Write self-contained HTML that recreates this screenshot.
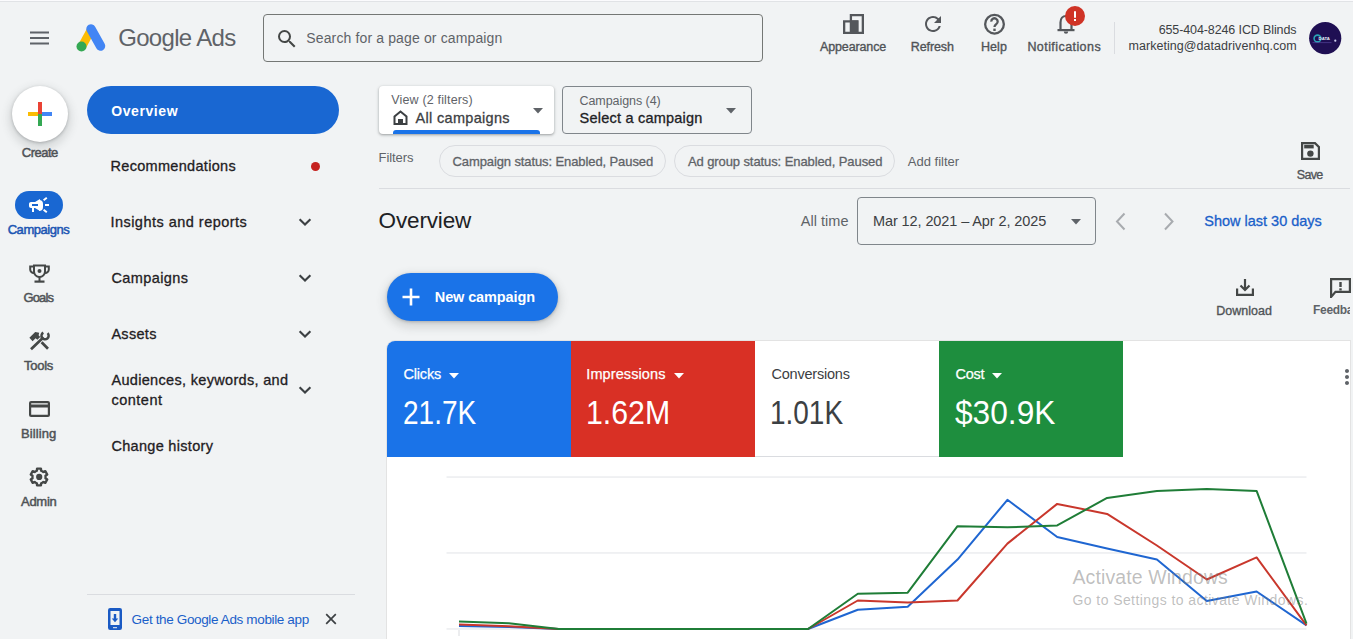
<!DOCTYPE html>
<html><head><meta charset="utf-8">
<style>
*{box-sizing:border-box;margin:0;padding:0}
html,body{width:1353px;height:639px;overflow:hidden;background:#f1f3f4;font-family:"Liberation Sans",sans-serif;position:relative}
.a{position:absolute;white-space:nowrap}
</style></head><body>
<div class="a" style="left:0;top:0;width:1353px;height:1px;background:#fbfbfd"></div>
<div class="a" style="left:0;top:1px;width:1353px;height:1px;background:#e1e3e6"></div>
<svg class="a" style="left:30px;top:31px" width="19" height="14" viewBox="0 0 19 14"><rect x="0" y="0.5" width="19" height="2" fill="#5f6368"/><rect x="0" y="6" width="19" height="2" fill="#5f6368"/><rect x="0" y="11.5" width="19" height="2" fill="#5f6368"/></svg>
<svg class="a" style="left:74px;top:22px" width="34" height="32" viewBox="0 0 34 32">
<line x1="8.5" y1="23.5" x2="17" y2="8" stroke="#fbbc04" stroke-width="8.5" stroke-linecap="round"/>
<line x1="17" y1="7" x2="26.5" y2="24" stroke="#4285f4" stroke-width="9.5" stroke-linecap="round"/>
<circle cx="7.5" cy="24.5" r="5" fill="#34a853"/></svg>
<div class="a" style="left:118.20px;top:26.200000000000003px;font-size:24px;line-height:24px;color:#5f6368;letter-spacing:-0.679px;">Google Ads</div>
<div class="a" style="left:263px;top:14px;width:500px;height:48px;border:1px solid #747775;border-radius:4px"></div>
<svg class="a" style="left:275px;top:27px" width="24" height="24" viewBox="0 0 24 24"><path fill="#444746" d="M15.5 14h-.79l-.28-.27A6.47 6.47 0 0 0 16 9.5 6.5 6.5 0 1 0 9.5 16c1.61 0 3.09-.59 4.23-1.57l.27.28v.79l5 4.99L20.49 19l-4.99-5zm-6 0C7.01 14 5 11.99 5 9.5S7.01 5 9.5 5 14 7.01 14 9.5 11.99 14 9.5 14z"/></svg>
<div class="a" style="left:306.30px;top:30.5px;font-size:14px;line-height:14px;color:#5f6368;letter-spacing:0.134px;">Search for a page or campaign</div>
<svg class="a" style="left:843px;top:14px" width="22" height="20" viewBox="0 0 22 20">
<path fill="none" stroke="#54575b" stroke-width="2.3" d="M7.9 1.15H19.85V18.85H7.9Z"/>
<path fill="none" stroke="#54575b" stroke-width="2.3" d="M1.15 18.85V7.3H14.5V18.85Z"/>
<rect x="7" y="6.5" width="8" height="13" fill="#54575b"/></svg>
<div class="a" style="left:820.00px;top:40.7px;font-size:12.5px;line-height:12.5px;-webkit-text-stroke:0.35px #505357;color:#505357;letter-spacing:-0.129px;">Appearance</div>
<svg class="a" style="left:921px;top:12px" width="24" height="24" viewBox="0 0 24 24"><path fill="#54575b" d="M17.65 6.35A7.958 7.958 0 0 0 12 4c-4.42 0-7.99 3.58-7.99 8s3.57 8 7.99 8c3.73 0 6.84-2.55 7.73-6h-2.08A5.99 5.99 0 0 1 12 18c-3.31 0-6-2.69-6-6s2.69-6 6-6c1.66 0 3.14.69 4.22 1.78L13 11h7V4l-2.35 2.35z"/></svg>
<div class="a" style="left:910.80px;top:40.7px;font-size:12.5px;line-height:12.5px;-webkit-text-stroke:0.35px #505357;color:#505357;letter-spacing:-0.119px;">Refresh</div>
<svg class="a" style="left:983px;top:12.5px" width="23" height="23" viewBox="0 0 23 23"><circle cx="11.5" cy="11.2" r="9.35" fill="none" stroke="#54575b" stroke-width="2.3"/><path fill="none" stroke="#54575b" stroke-width="2.3" d="M8.3 8.6A3.2 3.2 0 1 1 13.2 11.2C12 12 11.5 12.4 11.5 14"/><rect x="10.3" y="15.6" width="2.4" height="2.4" fill="#54575b"/></svg>
<div class="a" style="left:980.90px;top:40.7px;font-size:12.5px;line-height:12.5px;-webkit-text-stroke:0.35px #505357;color:#505357;letter-spacing:0.115px;">Help</div>
<svg class="a" style="left:1055.5px;top:12px" width="20" height="22" viewBox="0 0 20 22">
<path fill="none" stroke="#54575b" stroke-width="2.2" d="M4.5 18V10.5C4.5 6.5 6.8 4 10 4S15.5 6.5 15.5 10.5V18"/>
<rect x="1.5" y="17" width="17" height="2.2" fill="#54575b"/><path fill="#54575b" d="M7.8 19.5h4.4a2.2 2.2 0 0 1-4.4 0z"/></svg>
<div class="a" style="left:1065px;top:6px;width:20px;height:20px;border-radius:50%;background:#cf3326"></div>
<div class="a" style="left:1074px;top:10.5px;width:2.2px;height:7px;background:#fff;border-radius:1px"></div><div class="a" style="left:1074px;top:19px;width:2.2px;height:2.2px;background:#fff"></div>
<div class="a" style="left:1027.40px;top:40.7px;font-size:12.5px;line-height:12.5px;-webkit-text-stroke:0.35px #505357;color:#505357;letter-spacing:0.430px;">Notifications</div>
<div class="a" style="left:1114px;top:22px;width:1px;height:32px;background:#dadce0"></div>
<div class="a" style="left:1158.70px;top:23.6px;font-size:12.5px;line-height:12.5px;color:#3c4043;letter-spacing:-0.114px;">655-404-8246 ICD Blinds</div>
<div class="a" style="left:1128.60px;top:39.7px;font-size:12.5px;line-height:12.5px;color:#3c4043;letter-spacing:0.043px;">marketing@datadrivenhq.com</div>
<svg class="a" style="left:1309px;top:21.5px" width="33" height="33" viewBox="0 0 33 33">
<circle cx="16.2" cy="16.2" r="16.1" fill="#1f0f53"/>
<circle cx="8.5" cy="16.5" r="3.4" fill="none" stroke="#2aa2b5" stroke-width="1.6"/>
<text x="9.6" y="18.4" font-family="Liberation Sans" font-size="4.3" font-weight="bold" fill="#e8eaf6">DATA</text>
<rect x="3.5" y="20.2" width="19" height="0.9" fill="#5a4aa0" opacity=".7"/>
<circle cx="26.3" cy="18.7" r="1.1" fill="#d0d0f0"/></svg>
<div class="a" style="left:12px;top:86px;width:56px;height:56px;border-radius:50%;background:#fff;box-shadow:0 1px 3px rgba(60,64,67,.3),0 4px 8px 3px rgba(60,64,67,.15)"></div>
<svg class="a" style="left:28px;top:102px" width="24" height="24" viewBox="0 0 24 24">
<rect x="10" y="0" width="4" height="12" fill="#ea4335"/><rect x="10" y="12" width="4" height="12" fill="#34a853"/>
<rect x="0" y="10" width="10" height="4" fill="#fbbc04"/><rect x="14" y="10" width="10" height="4" fill="#4285f4"/></svg>
<div class="a" style="left:21.80px;top:145.6px;font-size:13px;line-height:13px;-webkit-text-stroke:0.5px #505357;color:#505357;letter-spacing:-0.518px;">Create</div>
<div class="a" style="left:15px;top:191px;width:48px;height:28px;border-radius:14px;background:#1967d2"></div>
<svg class="a" style="left:27px;top:193px" width="24" height="24" viewBox="0 0 24 24"><path fill="#fff" d="M18 11v2h4v-2h-4zm-2 6.61c.96.71 2.21 1.65 3.2 2.39.4-.53.8-1.07 1.2-1.6-.99-.74-2.24-1.68-3.2-2.4-.4.54-.8 1.08-1.2 1.610zM20.4 5.6c-.4-.53-.8-1.07-1.2-1.6-.99.74-2.24 1.68-3.2 2.4.4.53.8 1.07 1.2 1.6.96-.72 2.21-1.65 3.2-2.4zM4 9c-1.1 0-2 .9-2 2v2c0 1.1.9 2 2 2h1v4h2v-4h1l5 3V6L8 9H4z"/></svg>
<div class="a" style="left:32.2px;top:204px;width:6px;height:2px;background:#1967d2"></div><div class="a" style="left:38.5px;top:199.5px;width:4.3px;height:11px;border-radius:0 6px 6px 0;background:#fff"></div>
<div class="a" style="left:7.70px;top:222.9px;font-size:13px;line-height:13px;-webkit-text-stroke:0.5px #1b55b3;color:#1b55b3;letter-spacing:-0.457px;">Campaigns</div>
<svg class="a" style="left:29px;top:264px" width="21" height="19" viewBox="0 0 21 19">
<path fill="none" stroke="#444746" stroke-width="2" d="M5 1.5H16V7.5A5.5 5.5 0 0 1 5 7.5Z"/>
<path fill="none" stroke="#444746" stroke-width="2" d="M5 2.5H1.2V5.5A3.5 3.5 0 0 0 5 9M16 2.5H19.8V5.5A3.5 3.5 0 0 1 16 9"/>
<rect x="9.5" y="12" width="2" height="5" fill="#444746"/><rect x="5.5" y="16.5" width="10" height="2.2" fill="#444746"/>
<circle cx="10.5" cy="7" r="2" fill="#444746"/></svg>
<div class="a" style="left:23.40px;top:290.9px;font-size:13px;line-height:13px;-webkit-text-stroke:0.5px #505357;color:#505357;letter-spacing:-0.840px;">Goals</div>
<svg class="a" style="left:24px;top:326px" width="30" height="30" viewBox="0 0 30 30">
<path fill="none" stroke="#444746" stroke-width="2.7" d="M7 23.2L19.5 11.2M17.6 16.3L24 22.8"/>
<path fill="#444746" d="M5.4 11.8L11.2 6.1L15.2 6.8L14.6 9.3L16.2 10.9L13.4 13.8L11.6 12.3L8.6 15.2Z"/>
<path fill="none" stroke="#444746" stroke-width="2.5" d="M23.6 7.2A3.6 3.6 0 1 1 19.3 6.6"/>
</svg>
<div class="a" style="left:24.00px;top:358.95px;font-size:13px;line-height:13px;-webkit-text-stroke:0.5px #505357;color:#505357;letter-spacing:-0.262px;">Tools</div>
<svg class="a" style="left:29px;top:401px" width="21" height="16" viewBox="0 0 21 16">
<rect x="1.1" y="1.1" width="18.8" height="13.8" rx="1" fill="none" stroke="#444746" stroke-width="2.2"/>
<rect x="1" y="3.5" width="19" height="3" fill="#444746"/></svg>
<div class="a" style="left:20.90px;top:426.95px;font-size:13px;line-height:13px;-webkit-text-stroke:0.5px #505357;color:#505357;letter-spacing:0.124px;">Billing</div>
<svg class="a" style="left:24px;top:462px" width="30" height="30" viewBox="0 0 30 30"><path fill="none" stroke="#444746" stroke-width="2.4" stroke-linejoin="round" d="M11.70 9.28 L12.85 8.76 L13.07 6.62 L16.93 6.62 L17.15 8.76 L18.30 9.28 L19.33 10.02 L21.29 9.13 L23.22 12.49 L21.48 13.74 L21.60 15.00 L21.48 16.26 L23.22 17.51 L21.29 20.87 L19.33 19.98 L18.30 20.72 L17.15 21.24 L16.93 23.38 L13.07 23.38 L12.85 21.24 L11.70 20.72 L10.67 19.98 L8.71 20.87 L6.78 17.51 L8.52 16.26 L8.40 15.00 L8.52 13.74 L6.78 12.49 L8.71 9.13 L10.67 10.02Z"/><circle cx="15.2" cy="14.9" r="3.1" fill="#444746"/></svg>
<div class="a" style="left:21.00px;top:494.95px;font-size:13px;line-height:13px;-webkit-text-stroke:0.5px #505357;color:#505357;letter-spacing:-0.280px;">Admin</div>
<div class="a" style="left:87px;top:86px;width:252px;height:48px;border-radius:24px;background:#1967d2"></div>
<div class="a" style="left:111.30px;top:103.6px;font-size:14px;line-height:14px;font-weight:bold;color:#fff;letter-spacing:0.575px;">Overview</div>
<div class="a" style="left:110.50px;top:159.1px;font-size:14.5px;line-height:14.5px;-webkit-text-stroke:0.3px #1f2023;color:#1f2023;letter-spacing:0.311px;">Recommendations</div>
<div class="a" style="left:310.5px;top:161.5px;width:9px;height:9px;border-radius:50%;background:#c5221f"></div>
<div class="a" style="left:110.40px;top:214.9px;font-size:14.5px;line-height:14.5px;-webkit-text-stroke:0.3px #1f2023;color:#1f2023;letter-spacing:0.479px;">Insights and reports</div>
<svg class="a" style="left:293px;top:210px" width="24" height="24" viewBox="0 0 24 24"><path fill="none" stroke="#3c4043" stroke-width="2.1" d="M6.6 9.2L12 14.6L17.4 9.2"/></svg>
<div class="a" style="left:111.40px;top:271.0px;font-size:14.5px;line-height:14.5px;-webkit-text-stroke:0.3px #1f2023;color:#1f2023;letter-spacing:0.413px;">Campaigns</div>
<svg class="a" style="left:293px;top:266px" width="24" height="24" viewBox="0 0 24 24"><path fill="none" stroke="#3c4043" stroke-width="2.1" d="M6.6 9.2L12 14.6L17.4 9.2"/></svg>
<div class="a" style="left:111.40px;top:326.9px;font-size:14.5px;line-height:14.5px;-webkit-text-stroke:0.3px #1f2023;color:#1f2023;letter-spacing:0.307px;">Assets</div>
<svg class="a" style="left:293px;top:322px" width="24" height="24" viewBox="0 0 24 24"><path fill="none" stroke="#3c4043" stroke-width="2.1" d="M6.6 9.2L12 14.6L17.4 9.2"/></svg>
<div class="a" style="left:111.40px;top:373.0px;font-size:14.5px;line-height:14.5px;-webkit-text-stroke:0.3px #1f2023;color:#1f2023;letter-spacing:0.322px;">Audiences, keywords, and</div>
<div class="a" style="left:111.40px;top:392.7px;font-size:14.5px;line-height:14.5px;-webkit-text-stroke:0.3px #1f2023;color:#1f2023;letter-spacing:0.511px;">content</div>
<svg class="a" style="left:293px;top:378px" width="24" height="24" viewBox="0 0 24 24"><path fill="none" stroke="#3c4043" stroke-width="2.1" d="M6.6 9.2L12 14.6L17.4 9.2"/></svg>
<div class="a" style="left:111.40px;top:438.8px;font-size:14.5px;line-height:14.5px;-webkit-text-stroke:0.3px #1f2023;color:#1f2023;letter-spacing:0.309px;">Change history</div>
<div class="a" style="left:87px;top:594px;width:268px;height:1px;background:#dadce0"></div>
<svg class="a" style="left:108px;top:608px" width="14" height="22" viewBox="0 0 14 22">
<rect x="0" y="0" width="14" height="22" rx="2.2" fill="#1a5ac4"/>
<rect x="2.5" y="3" width="9" height="14" fill="#f1f3f4"/>
<rect x="5" y="19.2" width="4" height="1" fill="#f1f3f4"/>
<path fill="#1a5ac4" d="M5.8 6.1h2.4v4.3h2.1L7 14.2 3.7 10.4h2.1z"/></svg>
<div class="a" style="left:131.60px;top:613.2px;font-size:13.5px;line-height:13.5px;color:#1a5fc9;letter-spacing:-0.359px;">Get the Google Ads mobile app</div>
<svg class="a" style="left:325px;top:613px" width="12" height="12" viewBox="0 0 12 12"><path stroke="#3c4043" stroke-width="1.7" d="M1.2 1.2L10.8 10.8M10.8 1.2L1.2 10.8"/></svg>
<div class="a" style="left:379px;top:86px;width:175px;height:48px;border-radius:4px;background:#fff;box-shadow:0 1px 2px rgba(60,64,67,.3),0 1px 3px 1px rgba(60,64,67,.15);overflow:hidden"><div style="position:absolute;left:14px;top:44px;width:147px;height:4px;background:#1a73e8;border-radius:3px 3px 0 0"></div></div>
<div class="a" style="left:391.30px;top:93.9px;font-size:12.5px;line-height:12.5px;color:#5f6368;letter-spacing:0.161px;">View (2 filters)</div>
<svg class="a" style="left:393px;top:110px" width="15" height="15" viewBox="0 0 15 15"><path fill="none" stroke="#3c4043" stroke-width="2" d="M1.5 14V6.5L7.5 1.5L13.5 6.5V14Z"/><rect x="5" y="9" width="5" height="5" fill="#3c4043"/></svg>
<div class="a" style="left:415.60px;top:110.6px;font-size:14.5px;line-height:14.5px;-webkit-text-stroke:0.3px #3c4043;color:#3c4043;letter-spacing:0.307px;">All campaigns</div>
<svg class="a" style="left:533px;top:107.5px" width="10" height="6" viewBox="0 0 10 6"><path fill="#5f6368" d="M0 0h10L5 5.5z"/></svg>
<div class="a" style="left:562px;top:86px;width:190px;height:48px;border:1px solid #80868b;border-radius:4px"></div>
<div class="a" style="left:579.50px;top:95px;font-size:12.5px;line-height:12.5px;color:#5f6368;letter-spacing:-0.059px;">Campaigns (4)</div>
<div class="a" style="left:579.50px;top:110.9px;font-size:14.5px;line-height:14.5px;-webkit-text-stroke:0.3px #202124;color:#202124;letter-spacing:0.223px;">Select a campaign</div>
<svg class="a" style="left:726px;top:107.5px" width="10" height="6" viewBox="0 0 10 6"><path fill="#5f6368" d="M0 0h10L5 5.5z"/></svg>
<div class="a" style="left:378.60px;top:150.8px;font-size:13px;line-height:13px;color:#5f6368;letter-spacing:-0.081px;">Filters</div>
<div class="a" style="left:439px;top:145px;width:227px;height:32px;border:1px solid #dadce0;border-radius:16px"></div>
<div class="a" style="left:452.50px;top:154.85px;font-size:13px;line-height:13px;-webkit-text-stroke:0.3px #5f6368;color:#5f6368;letter-spacing:-0.102px;">Campaign status: Enabled, Paused</div>
<div class="a" style="left:674px;top:145px;width:221px;height:32px;border:1px solid #dadce0;border-radius:16px"></div>
<div class="a" style="left:687.90px;top:154.85px;font-size:13px;line-height:13px;-webkit-text-stroke:0.3px #5f6368;color:#5f6368;letter-spacing:-0.089px;">Ad group status: Enabled, Paused</div>
<div class="a" style="left:907.80px;top:154.85px;font-size:13px;line-height:13px;color:#5f6368;letter-spacing:0.003px;">Add filter</div>
<svg class="a" style="left:1301px;top:142px" width="19" height="18" viewBox="0 0 19 18"><path fill="none" stroke="#444746" stroke-width="2.2" d="M1.1 1.1H14L17.9 5V16.9H1.1Z"/><rect x="3.2" y="2.8" width="9.5" height="3.6" fill="#444746"/><circle cx="9.4" cy="11.6" r="3.2" fill="#444746"/></svg>
<div class="a" style="left:1296.80px;top:168.5px;font-size:12.5px;line-height:12.5px;-webkit-text-stroke:0.35px #505357;color:#505357;letter-spacing:-0.680px;">Save</div>
<div class="a" style="left:379px;top:188px;width:971px;height:1px;background:#dadce0"></div>
<div class="a" style="left:378.60px;top:209.8px;font-size:22.5px;line-height:22.5px;color:#202124;letter-spacing:-0.160px;">Overview</div>
<div class="a" style="left:800.80px;top:214.0px;font-size:14.5px;line-height:14.5px;color:#5f6368;letter-spacing:0.018px;">All time</div>
<div class="a" style="left:857px;top:197px;width:239px;height:48px;border:1px solid #80868b;border-radius:4px"></div>
<div class="a" style="left:873.00px;top:214.0px;font-size:14.5px;line-height:14.5px;color:#3c4043;letter-spacing:-0.099px;">Mar 12, 2021 &ndash; Apr 2, 2025</div>
<svg class="a" style="left:1070.5px;top:218.5px" width="10" height="6" viewBox="0 0 10 6"><path fill="#5f6368" d="M0 0h10L5 5.5z"/></svg>
<svg class="a" style="left:1114px;top:211px" width="14" height="20" viewBox="0 0 14 20"><path fill="none" stroke="#a8abaf" stroke-width="2" d="M10.5 2.5L3 10.5L10.5 18.5"/></svg>
<svg class="a" style="left:1162px;top:211px" width="14" height="20" viewBox="0 0 14 20"><path fill="none" stroke="#a8abaf" stroke-width="2" d="M3 2.5L10.5 10.5L3 18.5"/></svg>
<div class="a" style="left:1204.30px;top:213.85px;font-size:14.5px;line-height:14.5px;-webkit-text-stroke:0.3px #1a5fc9;color:#1a5fc9;letter-spacing:-0.008px;">Show last 30 days</div>
<div class="a" style="left:387px;top:273px;width:171px;height:48px;border-radius:24px;background:#1a73e8;box-shadow:0 1px 3px rgba(60,64,67,.3),0 4px 8px 3px rgba(60,64,67,.15)"></div>
<svg class="a" style="left:402px;top:288px" width="18" height="18" viewBox="0 0 18 18"><path stroke="#fff" stroke-width="2.6" d="M9 0.5V17.5M0.5 9H17.5"/></svg>
<div class="a" style="left:434.80px;top:290.2px;font-size:14.5px;line-height:14.5px;font-weight:bold;color:#fff;letter-spacing:-0.116px;">New campaign</div>
<svg class="a" style="left:1236px;top:279px" width="18" height="17" viewBox="0 0 18 17"><path fill="none" stroke="#444746" stroke-width="2.2" d="M1.1 9.5V15.9H16.9V9.5"/><path fill="none" stroke="#444746" stroke-width="2.2" d="M9 0V11M4.5 6.5L9 11L13.5 6.5"/></svg>
<div class="a" style="left:1216.20px;top:304.8px;font-size:12.5px;line-height:12.5px;-webkit-text-stroke:0.35px #505357;color:#505357;letter-spacing:0.023px;">Download</div>
<svg class="a" style="left:1330px;top:278px" width="21" height="20" viewBox="0 0 21 20"><path fill="none" stroke="#444746" stroke-width="2.2" d="M1.1 19V1.1H19.9V13.9H5.5Z"/><rect x="9.3" y="4" width="2.4" height="5" fill="#444746"/><rect x="9.3" y="10.3" width="2.4" height="2.2" fill="#444746"/></svg>
<div class="a" style="left:1313px;top:300px;width:37px;height:20px;overflow:hidden"><div style="position:absolute;left:0;top:4px;font-size:12px;line-height:12px;font-weight:bold;color:#5f6368;letter-spacing:-0.3px;white-space:nowrap">Feedback</div></div>
<div class="a" style="left:387px;top:341px;width:963px;height:320px;background:#fff;border-radius:8px 0 0 0;box-shadow:0 0 0 1px #e3e3e3"></div>
<div class="a" style="left:387px;top:341px;width:184px;height:116px;background:#1a73e8;border-radius:8px 0 0 0"></div>
<div class="a" style="left:571px;top:341px;width:184px;height:116px;background:#d93025"></div>
<div class="a" style="left:755px;top:341px;width:184px;height:116px;background:#fff;border-bottom:1px solid #dadce0"></div>
<div class="a" style="left:939px;top:341px;width:184px;height:116px;background:#1e8e3e"></div>
<div class="a" style="left:403.40px;top:366.8px;font-size:14.5px;line-height:14.5px;-webkit-text-stroke:0.25px #fff;color:#fff;letter-spacing:-0.163px;">Clicks</div>
<svg class="a" style="left:449px;top:372.5px" width="10" height="6" viewBox="0 0 10 6"><path fill="#fff" d="M0 0h10L5 5.5z"/></svg>
<div class="a" style="left:403.14px;top:396.7px;font-size:32.5px;line-height:32.5px;color:#fff;transform:scaleX(0.8617);transform-origin:0 0;">21.7K</div>
<div class="a" style="left:586.30px;top:366.8px;font-size:14.5px;line-height:14.5px;-webkit-text-stroke:0.25px #fff;color:#fff;letter-spacing:0.099px;">Impressions</div>
<svg class="a" style="left:673.5px;top:372.5px" width="10" height="6" viewBox="0 0 10 6"><path fill="#fff" d="M0 0h10L5 5.5z"/></svg>
<div class="a" style="left:586.44px;top:396.7px;font-size:32.5px;line-height:32.5px;color:#fff;transform:scaleX(0.9321);transform-origin:0 0;">1.62M</div>
<div class="a" style="left:771.40px;top:366.8px;font-size:14.5px;line-height:14.5px;color:#3c4043;letter-spacing:-0.204px;">Conversions</div>
<div class="a" style="left:770.28px;top:396.7px;font-size:32.5px;line-height:32.5px;color:#3c4043;transform:scaleX(0.8600);transform-origin:0 0;">1.01K</div>
<div class="a" style="left:955.40px;top:366.8px;font-size:14.5px;line-height:14.5px;-webkit-text-stroke:0.25px #fff;color:#fff;letter-spacing:-0.229px;">Cost</div>
<svg class="a" style="left:992px;top:372.5px" width="10" height="6" viewBox="0 0 10 6"><path fill="#fff" d="M0 0h10L5 5.5z"/></svg>
<div class="a" style="left:955.40px;top:396.7px;font-size:32.5px;line-height:32.5px;color:#fff;transform:scaleX(0.9746);transform-origin:0 0;">$30.9K</div>
<svg class="a" style="left:1335px;top:365px" width="24" height="24" viewBox="0 0 24 24"><path fill="#5f6368" d="M12 8c1.1 0 2-.9 2-2s-.9-2-2-2-2 .9-2 2 .9 2 2 2zm0 2c-1.1 0-2 .9-2 2s.9 2 2 2 2-.9 2-2-.9-2-2-2zm0 6c-1.1 0-2 .9-2 2s.9 2 2 2 2-.9 2-2-.9-2-2-2z"/></svg>
<svg class="a" style="left:387px;top:341px" width="963" height="298" viewBox="0 0 963 298"><rect x="59.5" y="135.39999999999998" width="860.0" height="1.3" fill="#e8eaed"/><rect x="59.5" y="211.29999999999995" width="860.0" height="1.3" fill="#e8eaed"/><rect x="59.5" y="287.29999999999995" width="860.0" height="1.3" fill="#e8eaed"/><rect x="71.5" y="289" width="1" height="6" fill="#dadce0"/><polyline points="72.0,284.9 121.9,286.0 171.7,288.0 221.6,288.0 271.4,288.0 321.3,288.0 371.1,288.0 421.0,288.0 470.8,268.8 520.7,265.8 570.5,218.6 620.4,158.8 670.2,196.0 720.1,207.5 769.9,218.6 819.8,260.0 869.6,250.5 919.5,284.4" fill="none" stroke="#1f66d1" stroke-width="2" stroke-linejoin="round"/><polyline points="72.0,283.4 121.9,285.3 171.7,288.0 221.6,288.0 271.4,288.0 321.3,288.0 371.1,288.0 421.0,288.0 470.8,259.5 520.7,261.4 570.5,259.5 620.4,202.6 670.2,162.9 720.1,172.9 769.9,204.5 819.8,238.5 869.6,216.4 919.5,284.4" fill="none" stroke="#c9372c" stroke-width="2" stroke-linejoin="round"/><polyline points="72.0,280.4 121.9,282.3 171.7,288.0 221.6,288.0 271.4,288.0 321.3,288.0 371.1,288.0 421.0,288.0 470.8,252.8 520.7,251.7 570.5,185.2 620.4,186.3 670.2,184.4 720.1,156.9 769.9,149.9 819.8,148.0 869.6,149.9 919.5,282.6" fill="none" stroke="#1f7d37" stroke-width="2" stroke-linejoin="round"/></svg>
<div class="a" style="left:1072.50px;top:568px;font-size:19.5px;line-height:19.5px;color:rgba(120,120,120,.48);letter-spacing:0.098px;">Activate Windows</div>
<div class="a" style="left:1072.50px;top:592.8px;font-size:14px;line-height:14px;color:rgba(120,120,120,.48);letter-spacing:0.421px;">Go to Settings to activate Windows.</div>
</body></html>
